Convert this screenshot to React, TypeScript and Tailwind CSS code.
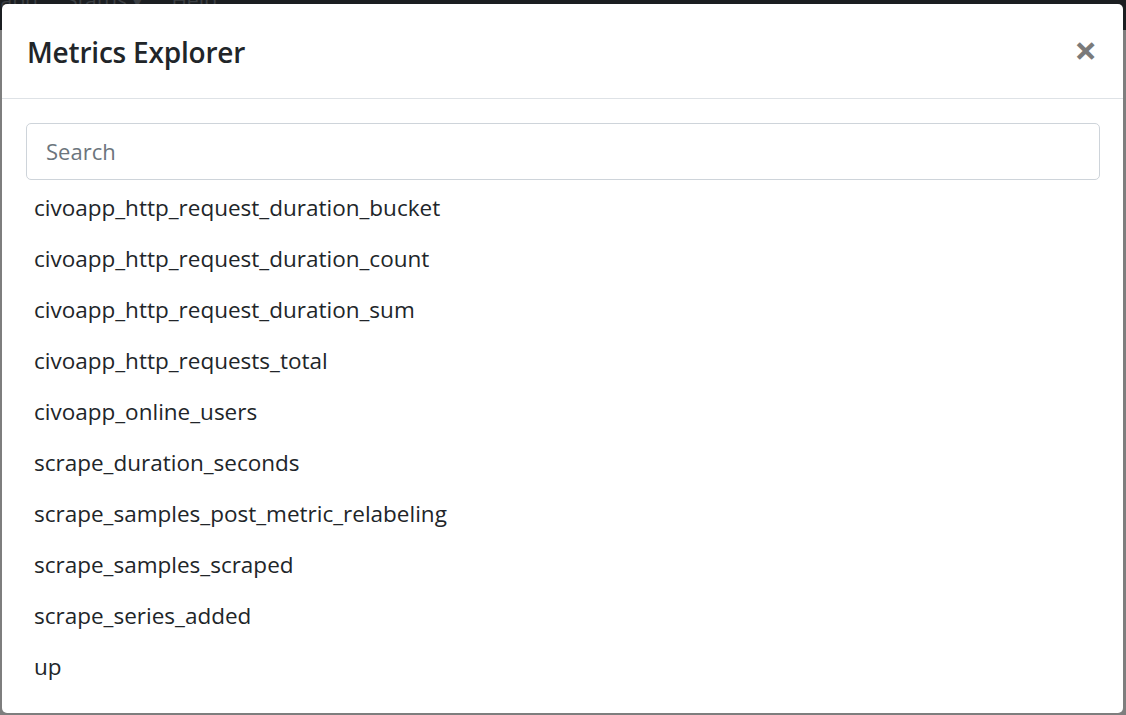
import React from "react";

const metrics = [
  "civoapp_http_request_duration_bucket",
  "civoapp_http_request_duration_count",
  "civoapp_http_request_duration_sum",
  "civoapp_http_requests_total",
  "civoapp_online_users",
  "scrape_duration_seconds",
  "scrape_samples_post_metric_relabeling",
  "scrape_samples_scraped",
  "scrape_series_added",
  "up",
];

export default function App() {
  return (
    <div
      className="relative w-[1126px] h-[715px] overflow-hidden bg-[#7e7e7e]"
      style={{ fontFamily: '"Open Sans", "Noto Sans", sans-serif' }}
    >
      {/* dimmed page navbar behind the backdrop */}
      <div className="h-[45px] bg-[#1b1e21] flex items-start gap-[28px] -ml-[8px] -mt-[15px] text-[21px] text-[#3b3f43]">
        <span>raph</span>
        <span>Status ▾</span>
        <span>Help</span>
      </div>

      {/* modal */}
      <div className="absolute left-[2px] top-[4px] w-[1121px] h-[709px] bg-white rounded-[5px] flex flex-col text-[#212529]">
        <div className="h-[95px] shrink-0 flex items-center justify-between pl-[25px] pr-[26px] border-b border-[#dee2e6]">
          <h5 className="text-[28px] font-semibold leading-none tracking-[-0.2px] mt-[2px]">
            Metrics Explorer
          </h5>
          <span className="text-[40px] font-bold leading-none text-[#7a7a7a] -mt-[2px]">
            ×
          </span>
        </div>
        <div className="pt-[24px] pl-[24px] pr-[23px]">
          <div className="h-[57px] border border-[#ced4da] rounded-[5px] flex items-center pl-[19px] text-[22px] text-[#6c757d]">
            Search
          </div>
          <ul className="mt-[2px]">
            {metrics.map((m) => (
              <li
                key={m}
                className="h-[51px] flex items-center pl-[8px] text-[22.5px] text-[#212529]"
              >
                {m}
              </li>
            ))}
          </ul>
        </div>
      </div>
    </div>
  );
}
